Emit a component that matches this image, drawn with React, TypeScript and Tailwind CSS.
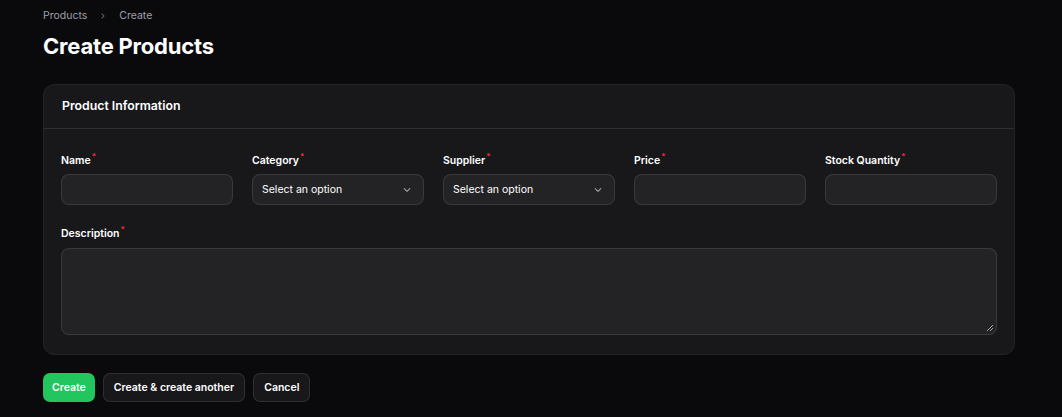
import React from "react";

function Chevron() {
  return (
    <svg width="10" height="10" viewBox="0 0 20 20" fill="currentColor" className="text-zinc-500">
      <path fillRule="evenodd" d="M7.21 14.77a.75.75 0 01.02-1.06L11.168 10 7.23 6.29a.75.75 0 111.04-1.08l4.5 4.25a.75.75 0 010 1.08l-4.5 4.25a.75.75 0 01-1.06-.02z" clipRule="evenodd" />
    </svg>
  );
}

function Label({ children }: { children: React.ReactNode }) {
  return (
    <div className="flex items-start text-[10.5px] font-semibold text-white leading-[16px]">
      <span>{children}</span>
      <span className="text-red-500 text-[8px] leading-[8px] -mt-[1px] ml-[1px]">*</span>
    </div>
  );
}

function Input() {
  return <div className="h-[31px] rounded-[8px] border border-white/10 bg-[#232326]" />;
}

function Select() {
  return (
    <div className="h-[31px] rounded-[8px] border border-white/10 bg-[#232326] flex items-center justify-between pl-[9px] pr-[9px]">
      <span className="text-[10.5px] text-white">Select an option</span>
      <svg width="14" height="14" viewBox="0 0 20 20" fill="none" stroke="#a1a1aa" strokeWidth="1.5" strokeLinecap="round" strokeLinejoin="round">
        <path d="M6 8l4 4 4-4" />
      </svg>
    </div>
  );
}

export default function App() {
  return (
    <div className="min-h-[417px] w-[1062px] bg-[#0a0a0c] pl-[43px] pr-[47px] pt-[8px]" style={{ fontFamily: "Inter, 'Noto Sans', sans-serif" }}>
      <div className="flex items-center gap-[11px] text-[10.5px] text-zinc-400 h-[16px]">
        <span>Products</span>
        <Chevron />
        <span>Create</span>
      </div>
      <h1 className="mt-[7px] text-[22px] leading-[30px] font-bold text-white tracking-[-0.2px]">Create Products</h1>
      <div className="mt-[23px] rounded-[12px] bg-[#18181b] border border-white/5">
        <div className="h-[44px] px-[18px] flex items-center border-b border-white/10">
          <span className="text-[12.3px] font-semibold text-white">Product Information</span>
        </div>
        <div className="px-[17px] pt-[24px] pb-[19px]">
          <div className="grid grid-cols-5 gap-x-[19px]">
            {[
              ["Name", false],
              ["Category", true],
              ["Supplier", true],
              ["Price", false],
              ["Stock Quantity", false],
            ].map(([l, s]) => (
              <div key={l as string} className="flex flex-col gap-[5px]">
                <Label>{l as string}</Label>
                {s ? <Select /> : <Input />}
              </div>
            ))}
          </div>
          <div className="mt-[21px] flex flex-col gap-[6px]">
            <Label>Description</Label>
            <div className="relative h-[87px] rounded-[8px] border border-white/10 bg-[#232326]">
              <svg className="absolute right-[2px] bottom-[2px]" width="8" height="8" viewBox="0 0 8 8" stroke="#9ca3af" strokeWidth="1">
                <path d="M7 1L1 7M7 4L4 7" />
              </svg>
            </div>
          </div>
        </div>
      </div>
      <div className="mt-[18px] flex gap-[8px]">
        <button className="h-[29px] px-[9px] rounded-[7px] bg-[#22c55e] text-white text-[10.5px] font-semibold">Create</button>
        <button className="h-[29px] px-[10px] rounded-[7px] bg-[#18181b] border border-white/10 text-white text-[10.5px] font-semibold">Create &amp; create another</button>
        <button className="h-[29px] px-[10px] rounded-[7px] bg-[#18181b] border border-white/10 text-white text-[10.5px] font-semibold">Cancel</button>
      </div>
    </div>
  );
}
